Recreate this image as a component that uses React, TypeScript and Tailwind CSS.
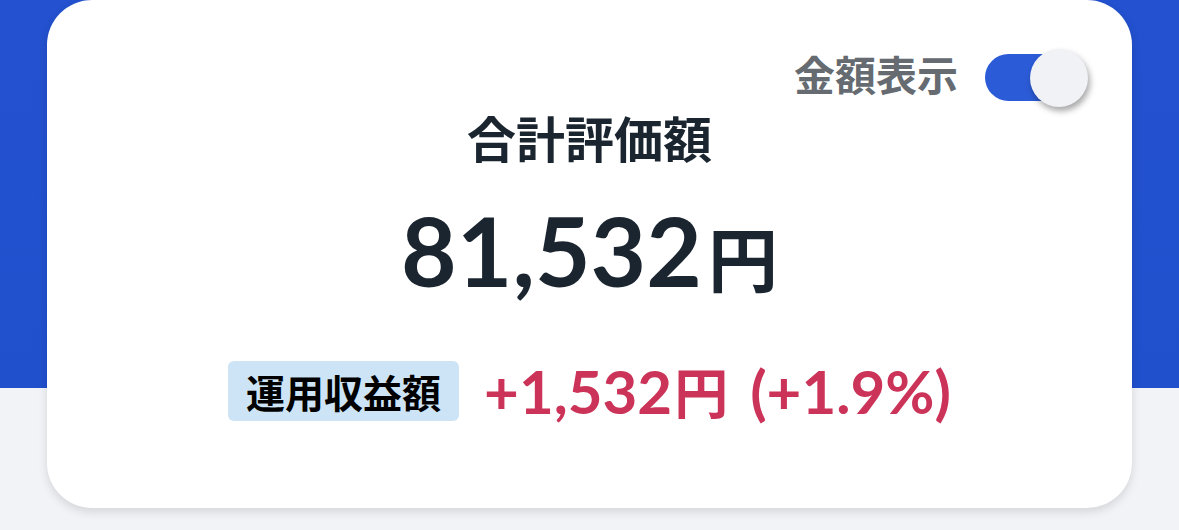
export default function App() {
  const jp = { fontFamily: '"Noto Sans CJK JP", "Noto Sans", sans-serif' };
  const num = { fontFamily: 'Lato, "Noto Sans CJK JP", sans-serif' };
  return (
    <div className="h-[530px] w-[1179px] overflow-hidden bg-[linear-gradient(to_bottom,#2351cf_0px,#2150cd_388px,#f1f3f7_388px)] pl-[47px]">
      <div className="flex h-[508px] w-[1085px] flex-col rounded-[45px] bg-white shadow-[0_4px_10px_rgba(0,0,0,0.12)]">
        <div className="flex items-center justify-end pr-[57px] pt-[53px]">
          <span style={jp} className="mb-[8px] text-[41px] font-bold leading-none text-[#666b71]">
            金額表示
          </span>
          <div className="relative ml-[27px] h-[47px] w-[90px] rounded-full bg-[#2b5bd6]">
            <div className="absolute right-[-13px] top-1/2 h-[58px] w-[58px] -translate-y-1/2 rounded-full bg-[#f1f2f6] shadow-[2px_4px_6px_rgba(0,0,0,0.35)]" />
          </div>
        </div>
        <div style={jp} className="mt-[10px] text-center text-[49px] font-bold leading-none text-[#1b2530]">
          合計評価額
        </div>
        <div style={num} className="mt-[41px] flex items-baseline justify-center font-bold leading-none text-[#1b2530]">
          <span className="text-[96px]">81,532</span>
          <span style={jp} className="ml-[6px] text-[70px]">円</span>
        </div>
        <div className="mt-[63px] flex items-center justify-center">
          <span style={jp} className="flex h-[60px] items-center rounded-[6px] bg-[#cce4f6] px-[18px] text-[39px] font-bold leading-none text-black">
            運用収益額
          </span>
          <span style={num} className="ml-[25px] flex items-baseline text-[60px] font-bold leading-none text-[#cc3358]">
            <span>+1,532</span>
            <span style={jp} className="ml-[2px] text-[54px]">円</span>
            <span className="ml-[22px]">(+1.9%)</span>
          </span>
        </div>
      </div>
    </div>
  );
}
